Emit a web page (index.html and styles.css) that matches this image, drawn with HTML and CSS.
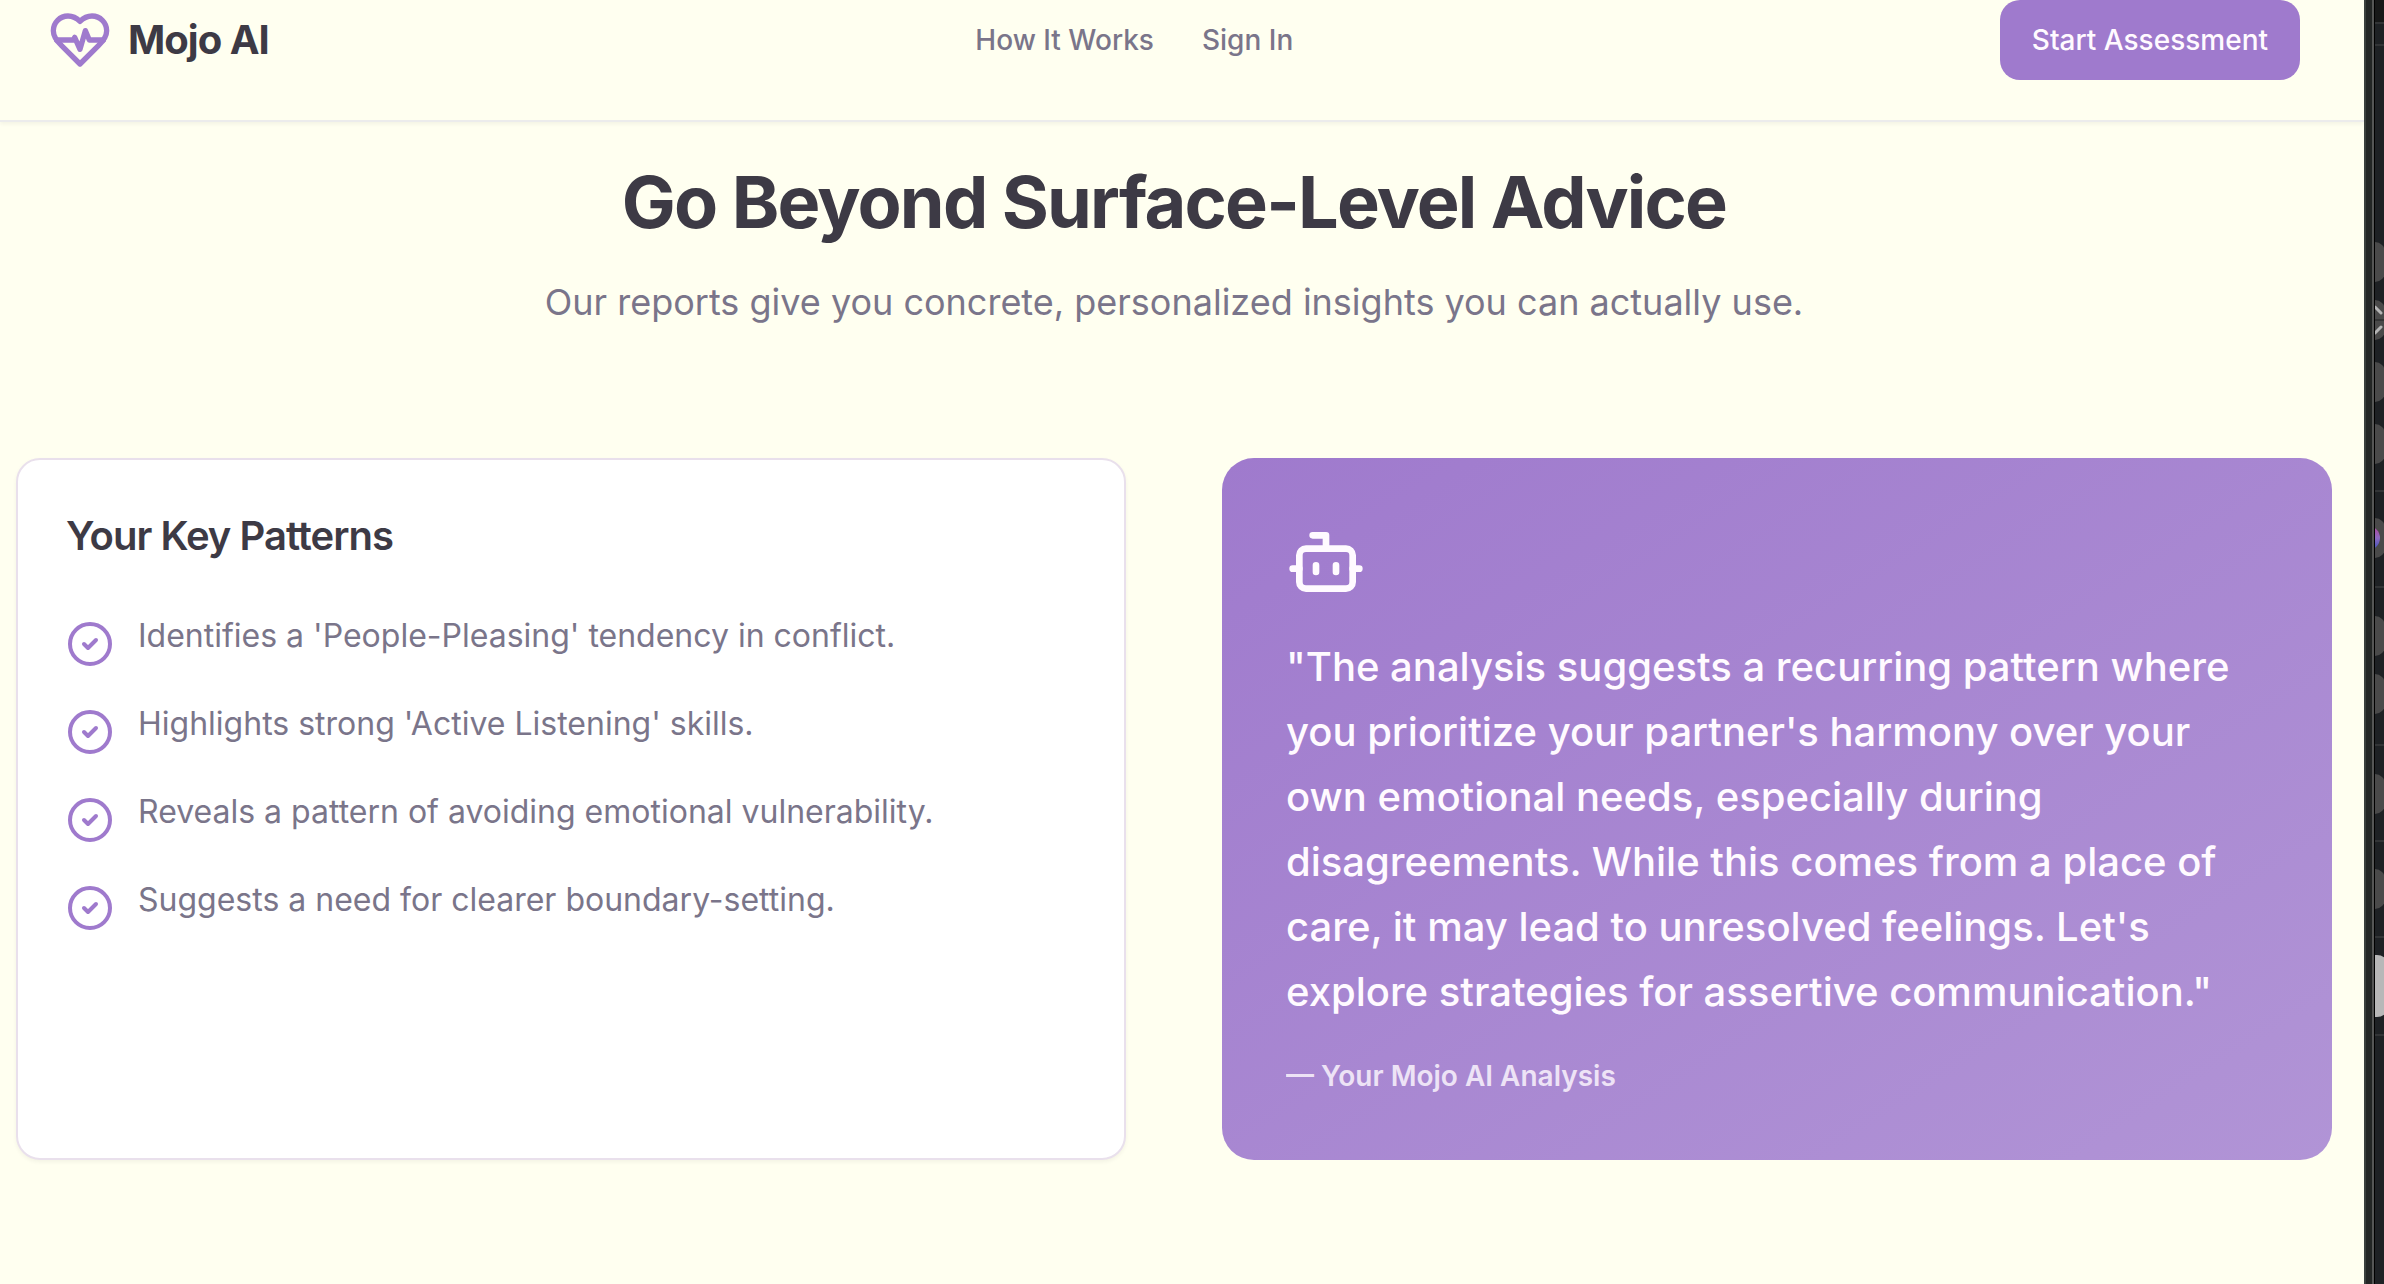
FILE: index.html
```html
<!DOCTYPE html>
<html lang="en">
<head>
<meta charset="utf-8">
<title>Mojo AI</title>
<link rel="stylesheet" href="styles.css">
</head>
<body>
<div class="page">
  <header class="header">
    <a class="brand" href="#">
      <svg class="brand-icon icon" viewBox="0 0 24 24" aria-hidden="true"><path d="M19 14c1.49-1.46 3-3.21 3-5.5A5.5 5.5 0 0 0 16.5 3c-1.76 0-3 .5-4.5 2-1.5-1.5-2.74-2-4.5-2A5.5 5.5 0 0 0 2 8.5c0 2.3 1.5 4.05 3 5.5l7 7Z"/><path d="M3.22 12H9.5l.5-1 2 4.5 2-7 1.5 3.5h5.27"/></svg>
      <span>Mojo AI</span>
    </a>
    <nav class="nav">
      <a href="#how">How It Works</a>
      <a href="#signin">Sign In</a>
    </nav>
    <button class="cta" type="button">Start Assessment</button>
  </header>
  <main class="main">
    <h1 class="title">Go Beyond Surface-Level Advice</h1>
    <p class="subtitle">Our reports give you concrete, personalized insights you can actually use.</p>
    <div class="cards">
      <section class="card patterns">
        <h2 class="card-title">Your Key Patterns</h2>
        <ul class="list">
          <li><svg class="check icon" viewBox="0 0 24 24" aria-hidden="true"><circle cx="12" cy="12" r="10"/><path d="m9 12 2 2 4-4"/></svg><span>Identifies a 'People-Pleasing' tendency in conflict.</span></li>
          <li><svg class="check icon" viewBox="0 0 24 24" aria-hidden="true"><circle cx="12" cy="12" r="10"/><path d="m9 12 2 2 4-4"/></svg><span>Highlights strong 'Active Listening' skills.</span></li>
          <li><svg class="check icon" viewBox="0 0 24 24" aria-hidden="true"><circle cx="12" cy="12" r="10"/><path d="m9 12 2 2 4-4"/></svg><span>Reveals a pattern of avoiding emotional vulnerability.</span></li>
          <li><svg class="check icon" viewBox="0 0 24 24" aria-hidden="true"><circle cx="12" cy="12" r="10"/><path d="m9 12 2 2 4-4"/></svg><span>Suggests a need for clearer boundary-setting.</span></li>
        </ul>
      </section>
      <section class="card analysis">
        <svg class="bot icon" viewBox="0 0 24 24" aria-hidden="true"><path d="M12 8V4H8"/><rect width="16" height="12" x="4" y="8" rx="2"/><path d="M2 14h2M20 14h2M15 13v2M9 13v2"/></svg>
        <blockquote class="quote">"The analysis suggests a recurring pattern where you prioritize your partner's harmony over your own emotional needs, especially during disagreements. While this comes from a place of care, it may lead to unresolved feelings. Let's explore strategies for assertive communication."</blockquote>
        <p class="source">— Your Mojo AI Analysis</p>
      </section>
    </div>
  </main>
</div>
<aside class="edge" aria-hidden="true">
  <svg class="edge-art" width="9" height="1284" viewBox="0 0 9 1284">
    <defs><linearGradient id="orb" x1="0" y1="0" x2="0" y2="1"><stop offset="0" stop-color="#b0459b"/><stop offset=".5" stop-color="#8c6ac0"/><stop offset="1" stop-color="#3b50b8"/></linearGradient></defs>
    <rect width="9" height="22" fill="#171818"/>
    <g fill="#323436"><rect y="22" width="9" height="2"/><rect y="44" width="9" height="2"/><rect y="490" width="9" height="2"/><rect y="586" width="9" height="2"/><rect y="744" width="9" height="2"/><rect y="840" width="9" height="2"/><rect y="936" width="9" height="2"/><rect y="1034" width="9" height="2"/></g>
    <g fill="#4a4a4a"><rect x="-20" y="242" width="30" height="40" rx="10"/><rect x="-20" y="300" width="30" height="40" rx="10"/><rect x="-20" y="362" width="30" height="40" rx="10"/><rect x="-20" y="424" width="30" height="40" rx="10"/><rect x="-20" y="518" width="30" height="40" rx="10"/><rect x="-20" y="616" width="30" height="40" rx="10"/><rect x="-20" y="674" width="30" height="40" rx="10"/><rect x="-20" y="774" width="30" height="40" rx="10"/><rect x="-20" y="869" width="30" height="40" rx="10"/></g>
    <rect y="319" width="9" height="2" fill="#343535"/>
    <path d="M0 307l6 6M0 333l6-6" fill="none" stroke="#b4b4b4" stroke-width="3" stroke-linecap="round"/>
    <circle cx="-7" cy="538" r="12" fill="url(#orb)"/>
    <rect x="-20" y="955" width="34" height="62" rx="12" fill="#b8b8b8"/>
  </svg>
</aside>
</body>
</html>
```
FILE: styles.css
```css
* { box-sizing: border-box; margin: 0; padding: 0; }

body {
  display: flex;
  min-height: 100vh;
  background: #fffff0;
  color: #3d3a45;
  font-family: Inter, "Liberation Sans", sans-serif;
  overflow: hidden;
}

a { color: inherit; text-decoration: none; }

.icon {
  display: block;
  flex: none;
  fill: none;
  stroke: currentColor;
  stroke-width: 2;
  stroke-linecap: round;
  stroke-linejoin: round;
}

.page { flex: 1; min-width: 0; }

.header {
  display: flex;
  align-items: center;
  justify-content: space-between;
  padding: 0 64px 40px 48px;
  border-bottom: 2px solid #ececec;
  box-shadow: 0 2px 4px rgba(0, 0, 0, 0.05);
}

.brand {
  display: flex;
  align-items: center;
  gap: 16px;
  font-size: 40px;
  line-height: 56px;
  font-weight: 700;
  letter-spacing: -0.025em;
}

.brand-icon { width: 64px; height: 64px; color: #9f7acd; }

.nav {
  display: flex;
  gap: 48px;
  font-size: 28px;
  line-height: 40px;
  font-weight: 500;
  color: #7a758a;
}

.cta {
  height: 80px;
  padding: 0 32px;
  border: 0;
  border-radius: 20px;
  background: #9f7acd;
  color: #fffaff;
  font: 500 28px/40px Inter, "Liberation Sans", sans-serif;
}

.main { padding: 40px 32px 124px 16px; }

.title {
  font-size: 72px;
  line-height: 80px;
  font-weight: 700;
  letter-spacing: -0.025em;
  text-align: center;
}

.subtitle {
  margin-top: 32px;
  font-size: 36px;
  line-height: 56px;
  color: #7a758a;
  text-align: center;
}

.cards {
  display: grid;
  grid-template-columns: 1fr 1fr;
  gap: 96px;
  margin-top: 128px;
}

.patterns {
  padding: 48px;
  border: 2px solid #e9e0ec;
  border-radius: 24px;
  background: #fff;
  box-shadow: 0 2px 4px rgba(0, 0, 0, 0.05);
}

.card-title {
  font-size: 40px;
  line-height: 56px;
  font-weight: 600;
  letter-spacing: -0.025em;
}

.list {
  display: flex;
  flex-direction: column;
  gap: 32px;
  margin-top: 48px;
  list-style: none;
  font-size: 32px;
  line-height: 48px;
  color: #7a758a;
}

.list li { display: flex; align-items: flex-start; gap: 24px; }

.check { width: 48px; height: 48px; margin-top: 8px; color: #9f7acd; }

.analysis {
  padding: 64px;
  border-radius: 32px;
  background: linear-gradient(to bottom right, #9f7acd, #b194d6);
  color: #fffaff;
}

.bot { width: 80px; height: 80px; }

.quote {
  margin-top: 32px;
  font-size: 40px;
  line-height: 65px;
  font-weight: 500;
}

.source {
  margin-top: 32px;
  font-size: 28px;
  line-height: 40px;
  font-weight: 600;
  opacity: 0.8;
}

.edge {
  flex: none;
  display: flex;
  justify-content: flex-end;
  width: 20px;
  background: linear-gradient(to right, #3a403d 2px, #232625 2px 8px, #555655 8px 10px, #000 10px 11px, #1e2124 11px);
}

.edge-art { display: block; }
```
